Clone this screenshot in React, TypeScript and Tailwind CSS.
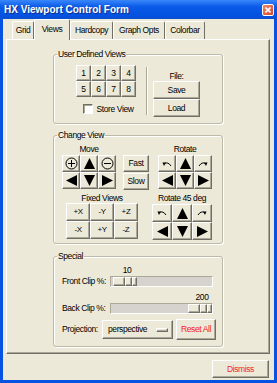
import type { ReactNode } from "react";

const ui = "font-['Liberation_Sans',Arial,sans-serif] text-[8.5px] tracking-[-0.4px] whitespace-nowrap";

const raised =
  "bg-[#ece9d8] border border-t-white border-l-white border-r-[#716f64] border-b-[#716f64] shadow-[inset_-1px_-1px_0_#aca899] flex items-center justify-center";

function Btn({ className = "", children }: { className?: string; children?: ReactNode }) {
  return (
    <button type="button" className={`${raised} ${className}`}>
      {children}
    </button>
  );
}

type Dir = "up" | "down" | "left" | "right";

const triPoints: Record<Dir, string> = {
  up: "5.5,0 11,11 0,11",
  down: "0,0 11,0 5.5,11",
  left: "11,0 11,11 0,5.5",
  right: "0,0 0,11 11,5.5",
};

function Tri({ dir }: { dir: Dir }) {
  return (
    <svg width="11" height="11" viewBox="0 0 11 11">
      <polygon points={triPoints[dir]} fill="#000" />
    </svg>
  );
}

function Zoom({ plus }: { plus?: boolean }) {
  return (
    <svg width="13" height="13" viewBox="0 0 13 13" fill="none" stroke="#000" strokeWidth="1">
      <circle cx="6.5" cy="6.5" r="5.5" />
      <line x1="3" y1="6.5" x2="10" y2="6.5" />
      {plus && <line x1="6.5" y1="3" x2="6.5" y2="10" />}
    </svg>
  );
}

// small curved "spin" arrow, mirrored for clockwise
function Spin({ cw }: { cw?: boolean }) {
  return (
    <svg width="10" height="6" viewBox="0 0 10 6" className={cw ? "-scale-x-100" : ""}>
      <path d="M9 5 Q6 0.5 2.5 2.5" fill="none" stroke="#000" strokeWidth="1" />
      <polygon points="0.5,1.5 4,1.5 2,5" fill="#000" />
    </svg>
  );
}

function Group({ title, className = "", children }: { title: string; className?: string; children: ReactNode }) {
  return (
    <fieldset
      className={`w-[170px] border border-[#bdbaaa] rounded-[3px] shadow-[inset_1px_1px_0_#fff,1px_1px_0_#fff] ${className}`}
    >
      <legend className="ml-[3px] px-[1px] leading-[13px]">{title}</legend>
      {children}
    </fieldset>
  );
}

function Thumb() {
  return (
    <div className="flex h-[9px]">
      <div className={`${raised} w-[12px] h-[9px]`} />
      <div className={`${raised} w-[7px] h-[9px]`} />
      <div className={`${raised} w-[5px] h-[9px]`} />
    </div>
  );
}

function Scale({ label, value, min, max, gapTop }: { label: string; value: number; min: number; max: number; gapTop: string }) {
  const travel = 101 - 24;
  const left = Math.round(((value - min) / (max - min)) * travel);
  return (
    <div className={`flex flex-col gap-[1px] ${gapTop}`}>
      <div className="h-[10px] leading-[10px] pl-[48px] flex">
        <span className="w-[24px] text-center" style={{ marginLeft: left + 3 }}>
          {value}
        </span>
      </div>
      <div className="flex items-center">
        <span className="w-[48px] leading-[11px]">{label}</span>
        <div className="w-[103px] h-[11px] bg-[#d6d3ce] border border-t-[#aca899] border-l-[#aca899] border-b-white border-r-white flex items-center">
          <div style={{ marginLeft: left }}>
            <Thumb />
          </div>
        </div>
      </div>
    </div>
  );
}

const tabs = [
  { name: "Grid", w: "w-[22px]" },
  { name: "Views", w: "w-[36px]", active: true },
  { name: "Hardcopy", w: "w-[43px]" },
  { name: "Graph Opts", w: "w-[52px]" },
  { name: "Colorbar", w: "w-[40px]" },
];

export default function App() {
  return (
    <div className={`w-[277px] h-[383px] bg-[#0553e0] flex flex-col text-black ${ui}`}>
      {/* title bar */}
      <div className="h-[19px] flex items-center justify-between pl-[4px] pr-[3px] bg-[linear-gradient(#3a87fa,#0a5be8_35%,#0451df_85%,#0a4fd0)]">
        <span className="font-bold text-[10px] tracking-normal text-white [text-shadow:1px_1px_0_#0b2f8c]">
          HX Viewport Control Form
        </span>
        <div className="w-[12px] h-[12px] rounded-[2px] border border-white bg-[linear-gradient(135deg,#f08a6a,#d8442a)] flex items-center justify-center">
          <svg width="6" height="6" viewBox="0 0 6 6" stroke="#fff" strokeWidth="1.6">
            <line x1="0.5" y1="0.5" x2="5.5" y2="5.5" />
            <line x1="5.5" y1="0.5" x2="0.5" y2="5.5" />
          </svg>
        </div>
      </div>

      <div className="mx-[3px] h-[361px] bg-[#ece9d8] flex flex-col">
        {/* tabs */}
        <div className="h-[20px] pl-[9px] flex items-end">
          {tabs.map((t) =>
            t.active ? (
              <div
                key={t.name}
                className={`${t.w} h-[21px] -mb-px relative z-10 bg-[#ece9d8] border-t border-l border-t-white border-l-white border-r border-r-[#716f64] rounded-t-[2px] flex items-center justify-center pb-[2px]`}
              >
                {t.name}
              </div>
            ) : (
              <div
                key={t.name}
                className={`${t.w} h-[18px] border-t border-l border-t-white border-l-white border-r border-r-[#716f64] rounded-t-[2px] flex items-center justify-center`}
              >
                {t.name}
              </div>
            ),
          )}
        </div>

        {/* tab page */}
        <div className="ml-[3px] w-[264px] h-[315px] border border-t-white border-l-white border-r-[#716f64] border-b-[#716f64] shadow-[inset_-1px_-1px_0_#aca899] pl-[46px] pt-[8px] flex flex-col">
          <Group title="User Defined Views">
            <div className="flex pt-[4px] pb-[6px]">
              <div className="pl-[22px] flex flex-col items-center">
                <div className="grid grid-cols-[repeat(4,15px)] grid-rows-[repeat(2,16px)]">
                  {[1, 2, 3, 4, 5, 6, 7, 8].map((n) => (
                    <Btn key={n}>{n}</Btn>
                  ))}
                </div>
                <div className="mt-[5px] h-[14px] flex items-center gap-[4px] pl-[4px]">
                  <div className="w-[10px] h-[10px] bg-white border border-t-[#716f64] border-l-[#716f64] border-b-white border-r-white shadow-[inset_1px_1px_0_#aca899]" />
                  <span>Store View</span>
                </div>
              </div>
              <div className="ml-[10px] mt-[2px] h-[48px] w-[2px] border-l border-l-[#aca899] border-r border-r-white" />
              <div className="ml-[5px] flex flex-col items-center">
                <div className="mt-[6px] h-[10px] leading-[10px]">File:</div>
                <Btn className="w-[47px] h-[18px]">Save</Btn>
                <Btn className="w-[47px] h-[18px]">Load</Btn>
              </div>
            </div>
          </Group>

          <Group title="Change View" className="mt-[5px]">
            <div className="flex flex-col pb-[3px]">
              <div className="flex">
                <div className="ml-[8px] flex flex-col items-center">
                  <div className="mt-[2px] h-[10px] leading-[10px]">Move</div>
                  <div className="mt-[1px] grid grid-cols-[repeat(3,18px)] grid-rows-[repeat(2,17px)]">
                    <Btn><Zoom plus /></Btn>
                    <Btn><Tri dir="up" /></Btn>
                    <Btn><Zoom /></Btn>
                    <Btn><Tri dir="left" /></Btn>
                    <Btn><Tri dir="down" /></Btn>
                    <Btn><Tri dir="right" /></Btn>
                  </div>
                </div>
                <div className="ml-[7px] pt-[13px] flex flex-col gap-[1px]">
                  <Btn className="w-[26px] h-[17px]">Fast</Btn>
                  <Btn className="w-[26px] h-[17px]">Slow</Btn>
                </div>
                <div className="ml-[9px] flex flex-col items-center">
                  <div className="mt-[2px] h-[10px] leading-[10px]">Rotate</div>
                  <div className="mt-[1px] grid grid-cols-[repeat(3,18px)] grid-rows-[repeat(2,17px)]">
                    <Btn><Spin /></Btn>
                    <Btn><Tri dir="up" /></Btn>
                    <Btn><Spin cw /></Btn>
                    <Btn><Tri dir="left" /></Btn>
                    <Btn><Tri dir="down" /></Btn>
                    <Btn><Tri dir="right" /></Btn>
                  </div>
                </div>
              </div>
              <div className="flex mt-[3px]">
                <div className="ml-[12px] flex flex-col items-center">
                  <div className="h-[10px] leading-[10px]">Fixed Views</div>
                  <div className="grid grid-cols-[repeat(3,24px)] grid-rows-[repeat(2,18px)] text-[8px]">
                    {["+X", "-Y", "+Z", "-X", "+Y", "-Z"].map((v) => (
                      <Btn key={v}>{v}</Btn>
                    ))}
                  </div>
                </div>
                <div className="ml-[14px] flex flex-col items-center">
                  <div className="h-[10px] leading-[10px]">Rotate 45 deg</div>
                  <div className="mt-[1px] grid grid-cols-[repeat(3,20px)] grid-rows-[repeat(2,18px)]">
                    <Btn><Spin /></Btn>
                    <Btn><Tri dir="up" /></Btn>
                    <Btn><Spin cw /></Btn>
                    <Btn><Tri dir="left" /></Btn>
                    <Btn><Tri dir="down" /></Btn>
                    <Btn><Tri dir="right" /></Btn>
                  </div>
                </div>
              </div>
            </div>
          </Group>

          <Group title="Special" className="mt-[6px]">
            <div className="pl-[8px] pb-[6px] flex flex-col">
              <Scale label="Front Clip %:" value={10} min={5} max={200} gapTop="mt-[2px]" />
              <Scale label="Back Clip %:" value={200} min={5} max={200} gapTop="mt-[5px]" />
              <div className="mt-[5px] flex items-center">
                <span className="w-[40px]">Projection:</span>
                <div className={`${raised} w-[71px] h-[19px] !justify-between pl-[5px] pr-[4px]`}>
                  <span>perspective</span>
                  <div className={`${raised} w-[12px] h-[4px]`} />
                </div>
                <Btn className="ml-[3px] w-[40px] h-[21px] text-[#f02020]">Reset All</Btn>
              </div>
            </div>
          </Group>
        </div>

        <div className="mt-[6px] pr-[5px] flex justify-end">
          <Btn className="w-[57px] h-[18px] text-[#f02828]">Dismiss</Btn>
        </div>
      </div>
    </div>
  );
}
